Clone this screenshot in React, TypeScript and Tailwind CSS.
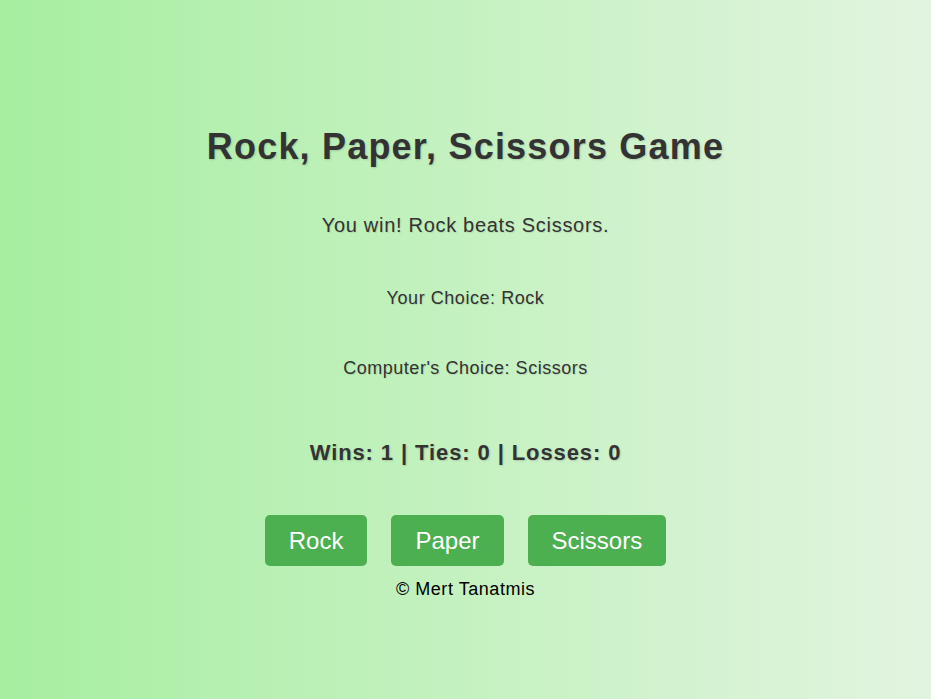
const choices = ["Rock", "Paper", "Scissors"];

const App = () => {
  return (
    <div className="min-h-screen w-full bg-gradient-to-r from-[#a6eea0] to-[#e2f4e0] font-['Liberation_Sans',Arial,sans-serif] text-[#333]">
      <div className="flex flex-col items-center pt-[126px] pb-[99px] text-center">
        <h1 className="text-[36px] font-bold leading-[41px] tracking-[1.2px] [text-shadow:1px_1px_2px_rgba(0,0,0,0.15)]">
          Rock, Paper, Scissors Game
        </h1>
        <p className="mt-[47px] text-[20px] leading-[23px] tracking-[0.7px] [text-shadow:1px_1px_1px_rgba(0,0,0,0.1)]">
          You win! Rock beats Scissors.
        </p>
        <p className="mt-[51px] text-[18px] leading-[21px] tracking-[0.55px] [text-shadow:1px_1px_1px_rgba(0,0,0,0.1)]">
          Your Choice: Rock
        </p>
        <p className="mt-[49px] text-[18px] leading-[21px] tracking-[0.52px] [text-shadow:1px_1px_1px_rgba(0,0,0,0.1)]">
          Computer's Choice: Scissors
        </p>
        <p className="mt-[61px] text-[22px] font-bold leading-[25px] tracking-[0.9px] [text-shadow:1px_1px_2px_rgba(0,0,0,0.15)]">
          Wins: 1 | Ties: 0 | Losses: 0
        </p>
        <div className="mt-[50px] flex gap-6">
          {choices.map((c) => (
            <button
              key={c}
              className="rounded-[5px] bg-[#4caf50] px-6 py-3 text-[24px] leading-[27px] text-white"
            >
              {c}
            </button>
          ))}
        </div>
        <footer className="mt-[13px] text-[18px] leading-[21px] tracking-[0.55px] text-black">
          © Mert Tanatmis
        </footer>
      </div>
    </div>
  );
};

export default App;
